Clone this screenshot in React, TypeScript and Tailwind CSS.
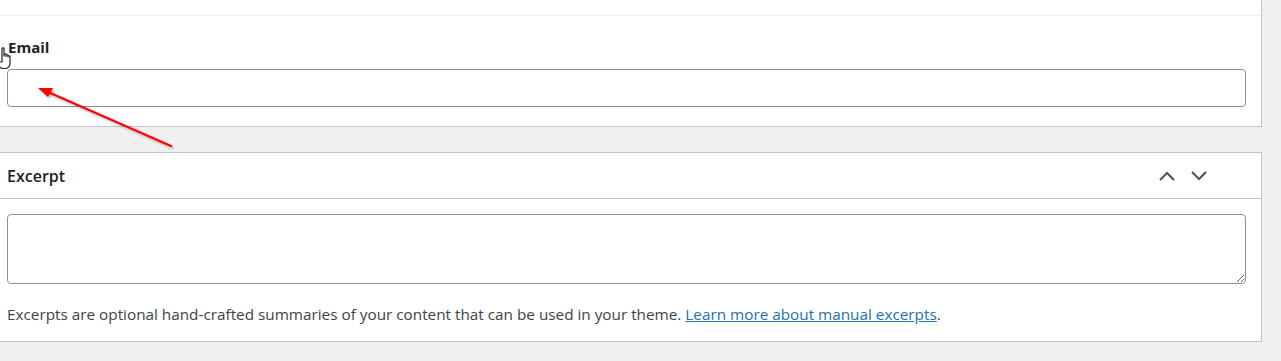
import React from "react";

export default function App() {
  return (
    <div className="relative w-[1281px] h-[361px] overflow-hidden bg-[#f0f0f1] font-['Open_Sans',sans-serif] text-[#3c434a]">
      {/* Panel 1 */}
      <div className="w-[1262px] bg-white border-r border-b border-[#c3c4c7]">
        <div className="h-[15px]" />
        <div className="border-t border-[#f0f0f1] pl-[7px] pr-[15px] pt-[21px] pb-[19px]">
          <label className="block pl-[1px] text-[15px] leading-[20px] font-bold text-[#1d2327]">Email</label>
          <input
            type="text"
            className="mt-[12px] block h-[38px] w-full rounded-[4px] border border-[#8c8f94] bg-white px-2 outline-none"
          />
        </div>
      </div>

      {/* Panel 2 */}
      <div className="mt-[25px] w-[1262px] bg-white border-t border-r border-b border-[#c3c4c7]">
        <div className="flex h-[46px] items-center justify-between border-b border-[#c3c4c7] pl-[7px] pr-[53px]">
          <h2 className="text-[16px] leading-[20px] font-semibold text-[#1d2327]">Excerpt</h2>
          <div className="flex items-center gap-[14px] text-[#50575e]">
            <svg width="18" height="18" viewBox="0 0 18 18" fill="none" stroke="currentColor" strokeWidth="2.2">
              <path d="M2 13 L9 6 L16 13" />
            </svg>
            <svg width="18" height="18" viewBox="0 0 18 18" fill="none" stroke="currentColor" strokeWidth="2.2">
              <path d="M2 5 L9 12 L16 5" />
            </svg>
          </div>
        </div>
        <div className="pl-[7px] pr-[15px] pt-[15px] pb-[17px]">
          <textarea className="block h-[70px] w-full rounded-[4px] border border-[#8c8f94] bg-white px-2 py-1 outline-none" />
          <p className="mt-[20px] text-[15.3px] leading-[20px] text-[#3c434a]">
            Excerpts are optional hand-crafted summaries of your content that can be used in your theme.{" "}
            <a href="#" className="text-[#2271b1] underline">Learn more about manual excerpts</a>.
          </p>
        </div>
      </div>

      {/* Hand cursor */}
      <svg className="absolute left-[-6px] top-[46px]" width="20" height="26" viewBox="0 0 20 26">
        <path
          d="M8 2.5 C8 1.5 10 1.5 10 2.5 L10 10 L10 8.5 C10 7.5 12 7.5 12 8.5 L12 10.5 L12 9.5 C12 8.5 14 8.5 14 9.5 L14 11 L14 10.5 C14 9.5 16 9.5 16 10.5 L16 17 C16 20 14.5 22 12 22.5 L9 22.5 C6.5 22.5 5 20.5 4 19 L1.5 14.5 C1 13.5 2.5 12.5 3.5 13.5 L6 16 L6 16 L8 16 Z"
          fill="white"
          stroke="#1d2327"
          strokeWidth="1.2"
          strokeLinejoin="round"
        />
      </svg>

      {/* Red annotation arrow */}
      <svg className="pointer-events-none absolute left-0 top-0" width="200" height="160" viewBox="0 0 200 160">
        <defs>
          <filter id="sh" x="-20%" y="-20%" width="140%" height="140%">
            <feDropShadow dx="1.5" dy="1.5" stdDeviation="1" floodColor="#000" floodOpacity="0.35" />
          </filter>
        </defs>
        <g filter="url(#sh)">
          <line x1="171" y1="146" x2="48" y2="92" stroke="#ff0000" strokeWidth="2" strokeLinecap="round" />
          <polygon points="38,88 53,88 48,97" fill="#ff0000" />
        </g>
      </svg>
    </div>
  );
}
